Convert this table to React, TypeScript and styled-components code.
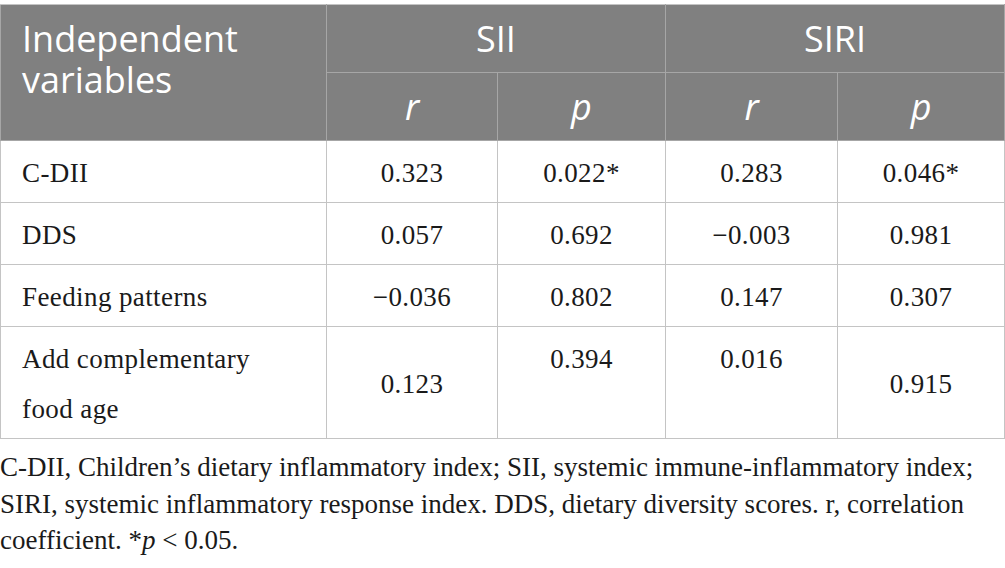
import styled, { createGlobalStyle } from "styled-components"

const GlobalStyle = createGlobalStyle`
  html, body {
    margin: 0;
    padding: 0;
    background: #ffffff;
  }
`

const Page = styled.div`
  width: 1005px;
  padding-top: 4px;
  box-sizing: border-box;
`

const Table = styled.table`
  width: 1004px;
  border-collapse: collapse;
  table-layout: fixed;
  border: 1px solid #c4c4c4;
`

const HeadCell = styled.th<{ $top?: boolean; $italic?: boolean }>`
  background: #808080;
  color: #ffffff;
  font-family: "Open Sans", "Noto Sans", sans-serif;
  font-weight: 400;
  font-size: 36px;
  line-height: 41px;
  font-style: ${(p) => (p.$italic ? "italic" : "normal")};
  text-align: ${(p) => (p.$top ? "left" : "center")};
  vertical-align: ${(p) => (p.$top ? "top" : "middle")};
  padding: ${(p) => (p.$top ? "13px 21px 0" : "0 10px")};
  height: 67px;
  border: 1px solid #a6a6a6;
  border-top-color: #c4c4c4;
`

const Cell = styled.td<{ $left?: boolean; $top?: boolean }>`
  font-family: "Liberation Serif", "Times New Roman", serif;
  font-size: 27px;
  letter-spacing: 0.4px;
  line-height: 50px;
  color: #1a1a1a;
  text-align: ${(p) => (p.$left ? "left" : "center")};
  vertical-align: ${(p) => (p.$top ? "top" : "middle")};
  padding: 7px 21px 4px;
  border: 1px solid #c4c4c4;
`

const Note = styled.p`
  margin: 10px 0 0;
  width: 1000px;
  font-family: "Liberation Serif", "Times New Roman", serif;
  font-size: 27px;
  letter-spacing: 0;
  line-height: 36.5px;
  color: #1a1a1a;
`

type Row = {
  name: string
  values: string[]
  top?: boolean[]
}

const rows: Row[] = [
  { name: "C-DII", values: ["0.323", "0.022*", "0.283", "0.046*"] },
  { name: "DDS", values: ["0.057", "0.692", "\u22120.003", "0.981"] },
  { name: "Feeding patterns", values: ["\u22120.036", "0.802", "0.147", "0.307"] },
  {
    name: "Add complementary food age",
    values: ["0.123", "0.394", "0.016", "0.915"],
    top: [false, true, true, false],
  },
]

export default function App() {
  return (
    <>
      <GlobalStyle />
      <Page>
        <Table>
          <colgroup>
            <col style={{ width: 326 }} />
            <col style={{ width: 171 }} />
            <col style={{ width: 168 }} />
            <col style={{ width: 172 }} />
            <col style={{ width: 167 }} />
          </colgroup>
          <thead>
            <tr>
              <HeadCell rowSpan={2} $top>
                Independent variables
              </HeadCell>
              <HeadCell colSpan={2}>SII</HeadCell>
              <HeadCell colSpan={2}>SIRI</HeadCell>
            </tr>
            <tr>
              <HeadCell $italic>r</HeadCell>
              <HeadCell $italic>p</HeadCell>
              <HeadCell $italic>r</HeadCell>
              <HeadCell $italic>p</HeadCell>
            </tr>
          </thead>
          <tbody>
            {rows.map((row) => (
              <tr key={row.name}>
                <Cell $left>{row.name}</Cell>
                {row.values.map((v, i) => (
                  <Cell key={i} $top={row.top?.[i]}>
                    {v}
                  </Cell>
                ))}
              </tr>
            ))}
          </tbody>
        </Table>
        <Note>
          C-DII, Children’s dietary inflammatory index; SII, systemic immune-inflammatory index;
          SIRI, systemic inflammatory response index. DDS, dietary diversity scores. r, correlation
          coefficient. *<i>p</i> &lt; 0.05.
        </Note>
      </Page>
    </>
  )
}
